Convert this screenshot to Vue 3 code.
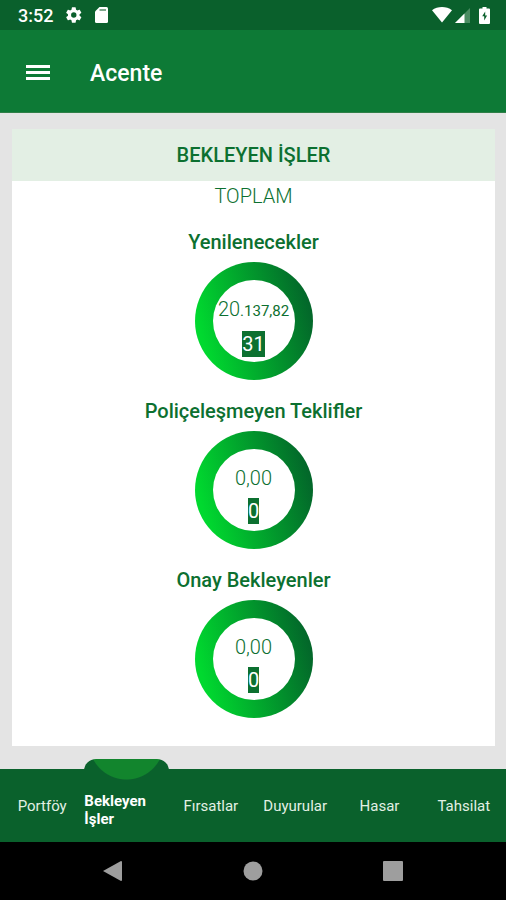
<template>
  <div class="agency-screen">
    <div class="status-bar">
      <div class="status-bar__left">
        <span class="status-bar__time">3:52</span>
        <svg class="status-icon" width="18" height="18" viewBox="0 0 24 24" aria-hidden="true">
          <path d="M19.4 13a7.500 7.500 0 0 0 0-2l2.200-1.700a.5.5 0 0 0 .1-.6l-2.100-3.600a.5.5 0 0 0-.6-.2l-2.600 1a7.500 7.500 0 0 0-1.700-1L14.300 2.200a.5.5 0 0 0-.5-.4h-4.200a.5.5 0 0 0-.5.4L8.700 4.900a7.500 7.500 0 0 0-1.700 1l-2.600-1a.5.5 0 0 0-.6.2L1.700 8.700a.5.5 0 0 0 .1.600L4 11a7.500 7.500 0 0 0 0 2l-2.200 1.700a.5.5 0 0 0-.1.600l2.100 3.600c.1.200.4.300.6.200l2.600-1a7.500 7.500 0 0 0 1.700 1l.4 2.700c0 .2.200.4.500.4h4.200c.3 0 .5-.2.500-.4l.4-2.700a7.500 7.500 0 0 0 1.700-1l2.600 1c.2.100.5 0 .6-.2l2.100-3.600a.5.5 0 0 0-.1-.6zM11.700 15.600a3.600 3.600 0 1 1 0-7.200 3.600 3.600 0 0 1 0 7.200z" />
        </svg>
        <svg class="status-icon" width="13" height="16" viewBox="0 0 13 16" aria-hidden="true">
          <path d="M4.500 0H11.500Q13 0 13 1.500V14.500Q13 16 11.500 16H1.500Q0 16 0 14.500V4.500z" />
          <path class="status-icon__slots" d="M4.500 2h6.500v2h-6.500z" />
        </svg>
      </div>
      <div class="status-bar__right">
        <svg class="status-icon" width="20" height="16" viewBox="0 0 20 16" aria-hidden="true">
          <path d="M0 3.200C5.500-1 14.500-1 20 3.200L10 15.500z" />
        </svg>
        <svg class="status-icon" width="15" height="15" viewBox="0 0 15 15" aria-hidden="true">
          <path class="status-icon__faded" d="M15 0V15H0z" />
          <path d="M9.500 5.500V15H0z" />
        </svg>
        <svg class="status-icon status-icon--battery" width="11" height="17" viewBox="0 0 11 17" aria-hidden="true">
          <path d="M3.500 0h4v1.500H10q1 0 1 1V16q0 1-1 1H1q-1 0-1-1V2.500q0-1 1-1h2.500z" />
          <path class="status-icon__cut" d="M6.200 4.500L3.200 9.300h2V13.500l2.900-5H6.200z" />
        </svg>
      </div>
    </div>

    <header class="app-bar">
      <button class="menu-btn" type="button" aria-label="Menü">
        <svg width="24" height="18" viewBox="0 0 24 18" aria-hidden="true">
          <path d="M0 1h24v3H0zM0 7h24v3H0zM0 13h24v3H0z" />
        </svg>
      </button>
      <h1 class="app-bar__title">Acente</h1>
    </header>

    <main class="content">
      <section class="card">
        <h2 class="card__header">BEKLEYEN İŞLER</h2>
        <p class="card__total">TOPLAM</p>
        <div class="jobs">
          <div v-for="job in jobs" :key="job.title" class="job">
            <h3 class="job__title">{{ job.title }}</h3>
            <div class="job__ring">
              <div class="job__inner">
                <span class="job__amount">{{ job.amount }}<small v-if="job.rest">{{ job.rest }}</small></span>
                <span class="job__count">{{ job.count }}</span>
              </div>
            </div>
          </div>
        </div>
      </section>
    </main>

    <nav class="tabs">
      <button
        v-for="tab in tabs"
        :key="tab"
        type="button"
        class="tab"
        :class="{ 'tab--active': tab === activeTab }"
        @click="activeTab = tab"
      >
        <span class="tab__label">{{ tab }}</span>
      </button>
    </nav>

    <div class="system-nav">
      <button type="button" class="system-nav__btn" aria-label="Geri">
        <svg width="20" height="20" viewBox="0 0 20 20"><path d="M0 10L18 0Q19 0 19 1V19Q19 20 18 20z" /></svg>
      </button>
      <button type="button" class="system-nav__btn" aria-label="Ana ekran">
        <svg width="20" height="20" viewBox="0 0 20 20"><circle cx="10" cy="10" r="9.500" /></svg>
      </button>
      <button type="button" class="system-nav__btn" aria-label="Son uygulamalar">
        <svg width="20" height="20" viewBox="0 0 20 20"><rect width="20" height="20" rx="1" /></svg>
      </button>
    </div>
  </div>
</template>

<script setup>
import { ref } from 'vue'

const jobs = [
  { title: 'Yenilenecekler', amount: '20', rest: '.137,82', count: 31 },
  { title: 'Poliçeleşmeyen Teklifler', amount: '0,00', count: 0 },
  { title: 'Onay Bekleyenler', amount: '0,00', count: 0 }
]

const tabs = ['Portföy', 'Bekleyen İşler', 'Fırsatlar', 'Duyurular', 'Hasar', 'Tahsilat']
const activeTab = ref('Bekleyen İşler')
</script>

<style>
body {
  margin: 0;
  background: #e4e4e4;
}
</style>

<style scoped>
.agency-screen {
  min-height: 100vh;
  display: flex;
  flex-direction: column;
  font-family: Roboto, 'Noto Sans', sans-serif;
  color: #0c7030;
}
button {
  padding: 0;
  border: none;
  background: transparent;
  font-family: inherit;
  cursor: pointer;
}

.status-bar {
  height: 30px;
  padding: 0 16px 0 18px;
  display: flex;
  align-items: center;
  justify-content: space-between;
  background: #0a602c;
  color: #fff;
}
.status-bar__left {
  display: flex;
  align-items: center;
  gap: 12px;
}
.status-bar__right {
  display: flex;
  align-items: center;
  gap: 3px;
}
.status-bar__time {
  font-size: 18px;
  font-weight: 500;
}
.status-icon {
  fill: #fff;
}
.status-icon--battery {
  margin-left: 6px;
}
.status-icon__cut {
  fill: #0a602c;
}
.status-icon__slots {
  fill: #7fa88d;
}
.status-icon__faded {
  fill: #4a8c62;
}

.app-bar {
  height: 83px;
  padding: 4px 26px 0;
  display: flex;
  align-items: center;
  gap: 40px;
  box-sizing: border-box;
  border-bottom: 1px solid #2f7f48;
  background: #0d7a36;
}
.menu-btn {
  display: flex;
}
.menu-btn svg {
  fill: #fff;
}
.app-bar__title {
  margin: 0;
  font-size: 23px;
  font-weight: 500;
  color: #fff;
}

.content {
  flex: 1;
  display: flex;
  padding: 16px 11px 23px 12px;
  background: #e4e4e4;
}
.card {
  flex: 1;
  padding-bottom: 27px;
  background: #fff;
  text-align: center;
}
.card__header {
  margin: 0;
  background: #e3efe4;
  font-size: 20px;
  font-weight: 500;
  line-height: 52px;
}
.card__total {
  margin: 0 0 19px;
  font-size: 20px;
  font-weight: 300;
  line-height: 30px;
}
.jobs {
  display: flex;
  flex-direction: column;
  gap: 19px;
}
.job {
  display: flex;
  flex-direction: column;
  align-items: center;
  gap: 8px;
}
.job__title {
  margin: 0;
  font-size: 20px;
  font-weight: 500;
  line-height: 24px;
}
.job__ring {
  width: 118px;
  height: 118px;
  padding: 18px;
  box-sizing: border-box;
  border-radius: 50%;
  background: linear-gradient(75deg, #00d92f 12%, #03642a 92%);
}
.job__inner {
  height: 82px;
  padding-top: 17px;
  display: flex;
  flex-direction: column;
  align-items: center;
  gap: 8px;
  box-sizing: border-box;
  border-radius: 50%;
  background: #fff;
}
.job__amount {
  font-size: 20px;
  font-weight: 300;
  line-height: 24px;
  white-space: nowrap;
}
.job__amount small {
  font-size: 15px;
  font-weight: 400;
}
.job__count {
  background: #0c7030;
  color: #fff;
  font-size: 20px;
  line-height: 26px;
}

.tabs {
  display: grid;
  grid-template-columns: repeat(6, 1fr);
  min-height: 73px;
  background: #0a612c;
}
.tab {
  position: relative;
  color: #e2f0e4;
  font-size: 15px;
  line-height: 18px;
}
.tab--active {
  color: #fff;
  font-weight: 700;
  text-align: left;
}
.tab__label {
  position: relative;
  display: block;
}
.tab--active .tab__label {
  padding-top: 8px;
}
/* raised marker above the selected tab */
.tab--active::before {
  content: '';
  position: absolute;
  top: -10px;
  left: 0;
  width: 100%;
  height: 24px;
  border-radius: 12px 12px 0 0;
  background: radial-gradient(circle at 50% -17px, #12852d 37px, #0a612c 38px);
}

.system-nav {
  height: 58px;
  display: flex;
  align-items: center;
  justify-content: center;
  gap: 120px;
  background: #000;
}
.system-nav__btn {
  display: flex;
}
.system-nav__btn svg {
  fill: #9e9e9e;
}
</style>
